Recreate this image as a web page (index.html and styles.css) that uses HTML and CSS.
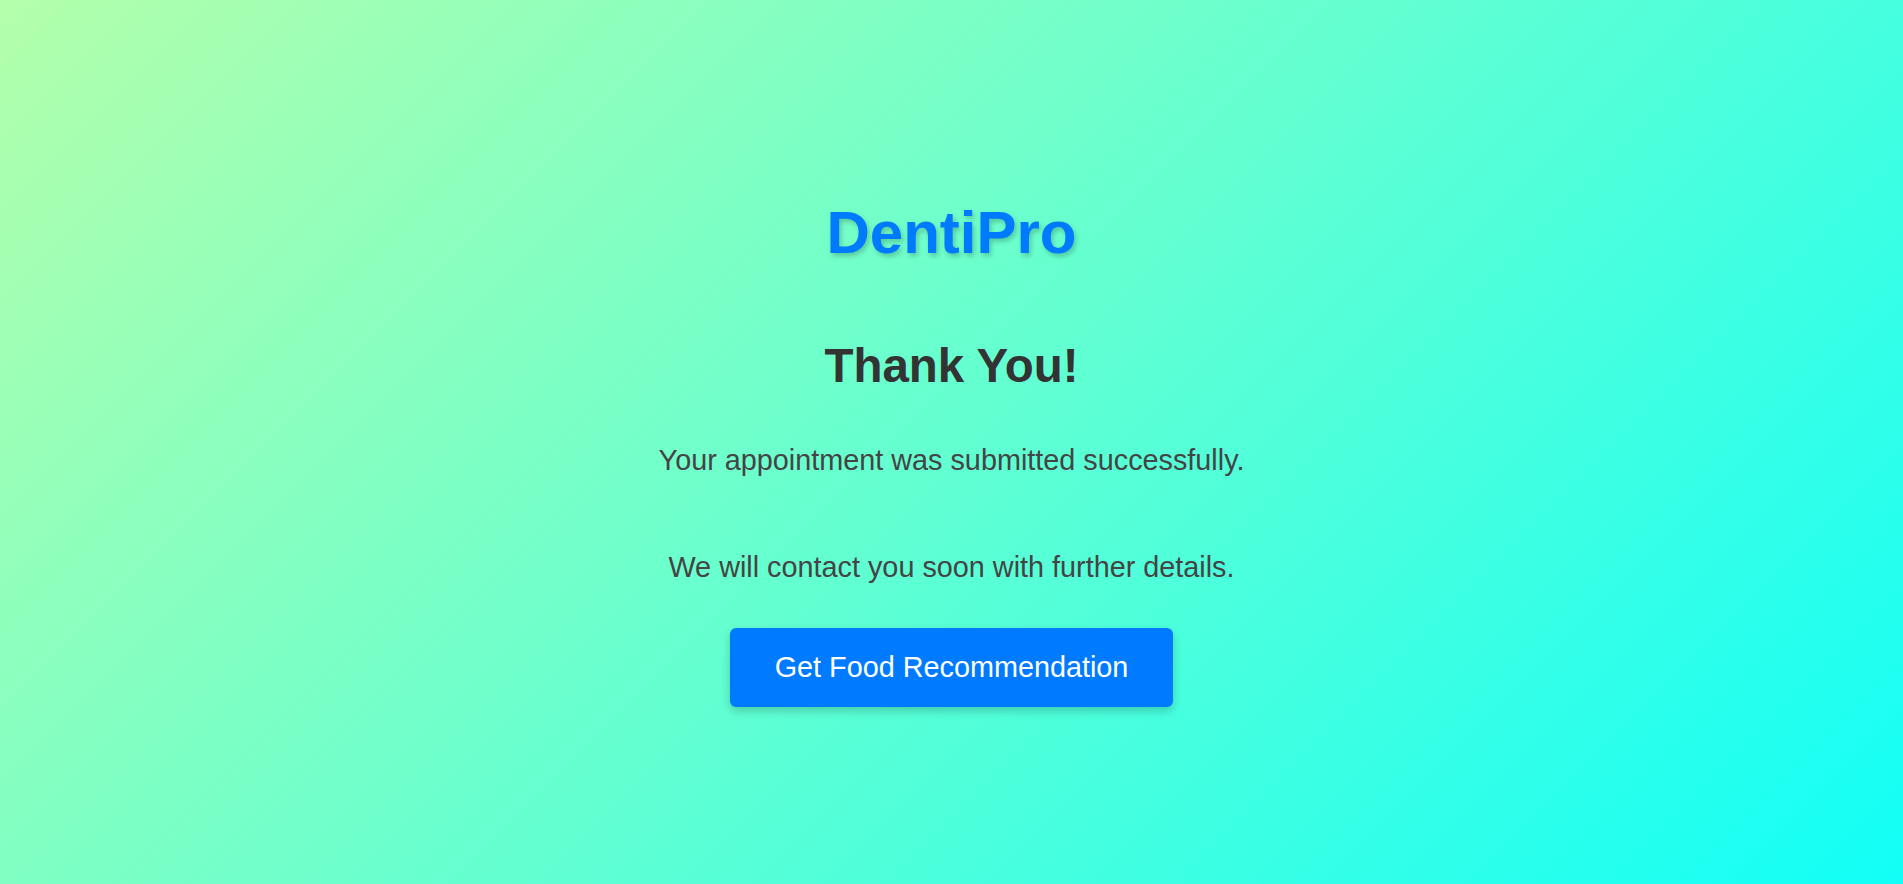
FILE: index.html
```html
<!DOCTYPE html>
<html lang="en">
<head>
<meta charset="UTF-8">
<title>DentiPro - Thank You</title>
<link rel="stylesheet" href="styles.css">
</head>
<body>
<main class="page">
  <h1 class="brand">DentiPro</h1>
  <h2 class="thanks">Thank You!</h2>
  <p class="msg msg-first">Your appointment was submitted successfully.</p>
  <p class="msg msg-second">We will contact you soon with further details.</p>
  <button class="cta" type="button">Get Food Recommendation</button>
</main>
</body>
</html>
```

FILE: styles.css
```css
html, body {
  margin: 0;
  padding: 0;
}

body {
  min-height: 100vh;
  background: linear-gradient(135deg, #b3ffab 0%, #12fff7 100%);
  font-family: "Liberation Sans", Arial, Helvetica, sans-serif;
  overflow: hidden;
}

.page {
  min-height: 100vh;
  box-sizing: border-box;
  display: flex;
  flex-direction: column;
  align-items: center;
  text-align: center;
  padding-top: 198px;
}

.brand {
  margin: 0 0 71px;
  font-size: 60px;
  font-weight: bold;
  color: #007bff;
  text-shadow: 2px 3px 5px rgba(0, 0, 0, 0.22);
}

.thanks {
  margin: 0 0 51px;
  font-size: 47.5px;
  font-weight: bold;
  color: #333333;
}

.msg {
  margin: 0;
  font-size: 28.8px;
  color: #444444;
}

.msg-first {
  margin-bottom: 74px;
}

.msg-second {
  margin-bottom: 44px;
}

.cta {
  font-family: "Liberation Sans", Arial, Helvetica, sans-serif;
  font-size: 28.8px;
  color: #ffffff;
  background: #007bff;
  border: none;
  border-radius: 6px;
  padding: 23px 45px;
  box-shadow: 0 4px 10px rgba(0, 0, 0, 0.2);
  cursor: pointer;
}
```
